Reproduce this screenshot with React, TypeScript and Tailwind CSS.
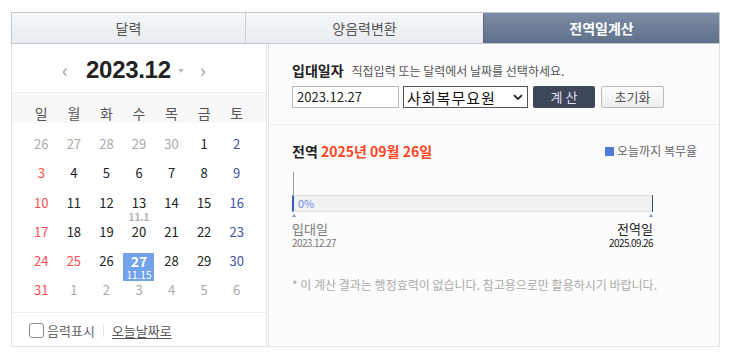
import React from "react";

const KR = { fontFamily: '"Noto Sans CJK KR", "Noto Sans", sans-serif' };

type Cell = { d: string; c: string; sub?: string; sel?: boolean };

const G = "text-[#aaaaaa]";
const N = "text-[#222222]";
const R = "text-[#ff4d4d]";
const B = "text-[#4652a8]";

const rows: Cell[][] = [
  [
    { d: "26", c: G },
    { d: "27", c: G },
    { d: "28", c: G },
    { d: "29", c: G },
    { d: "30", c: G },
    { d: "1", c: N },
    { d: "2", c: B },
  ],
  [
    { d: "3", c: R },
    { d: "4", c: N },
    { d: "5", c: N },
    { d: "6", c: N },
    { d: "7", c: N },
    { d: "8", c: N },
    { d: "9", c: B },
  ],
  [
    { d: "10", c: R },
    { d: "11", c: N },
    { d: "12", c: N },
    { d: "13", c: N, sub: "11.1" },
    { d: "14", c: N },
    { d: "15", c: N },
    { d: "16", c: B },
  ],
  [
    { d: "17", c: R },
    { d: "18", c: N },
    { d: "19", c: N },
    { d: "20", c: N },
    { d: "21", c: N },
    { d: "22", c: N },
    { d: "23", c: B },
  ],
  [
    { d: "24", c: R },
    { d: "25", c: R },
    { d: "26", c: N },
    { d: "27", c: "text-white", sub: "11.15", sel: true },
    { d: "28", c: N },
    { d: "29", c: N },
    { d: "30", c: B },
  ],
  [
    { d: "31", c: R },
    { d: "1", c: G },
    { d: "2", c: G },
    { d: "3", c: G },
    { d: "4", c: G },
    { d: "5", c: G },
    { d: "6", c: G },
  ],
];

const week = ["일", "월", "화", "수", "목", "금", "토"];

export default function App() {
  return (
    <div className="w-[733px] h-[359px] bg-white overflow-hidden" style={KR}>
      <div className="ml-[11px] mt-[12px] w-[709px]">
        {/* Tabs */}
        <div className="flex h-[32px] border border-[#c3c8ce]">
          <div className="w-[234px] flex items-center justify-center bg-gradient-to-b from-[#f5f7f9] to-[#e8ecf0] text-[14px] text-[#555] border-r border-[#c9ced4]">
            달력
          </div>
          <div className="w-[238px] flex items-center justify-center bg-gradient-to-b from-[#f5f7f9] to-[#e8ecf0] text-[14px] text-[#555] border-r border-[#5b6a80]">
            양음력변환
          </div>
          <div className="flex-1 flex items-center justify-center bg-gradient-to-b from-[#7d8ca3] to-[#5f7089] text-[14px] font-bold text-white">
            전역일계산
          </div>
        </div>

        {/* Body */}
        <div className="flex h-[303px]">
          {/* Left calendar */}
          <div className="w-[256px] border-l border-r border-b border-[#e3e3e3] bg-white flex flex-col">
            <div className="h-[48px] flex items-center pl-[50px] pt-[4px]">
              <span className="text-[#a0a0a0] text-[20px] leading-none">‹</span>
              <span
                className="ml-[18px] text-[24px] font-bold text-[#222] leading-none tracking-[-0.3px]"
                style={{ fontFamily: '"Liberation Sans", Arial, sans-serif' }}
              >
                2023.12
              </span>
              <svg className="ml-[7px] mt-[2px]" width="6" height="4" viewBox="0 0 6 4">
                <path d="M0 0 L6 0 L3 4 Z" fill="#c0c0c0" />
              </svg>
              <span className="ml-[16px] text-[#a0a0a0] text-[20px] leading-none">›</span>
            </div>
            <div className="h-[31px] bg-[#f8f8f8] border-t border-[#eeeeee] grid grid-cols-7 px-[13px] items-center">
              {week.map((w) => (
                <div key={w} className="text-center text-[14px] text-[#555] leading-none pt-[10px]">
                  {w}
                </div>
              ))}
            </div>
            <div className="px-[13px] pt-[13px]">
              {rows.map((r, i) => (
                <div key={i} className="grid grid-cols-7 h-[29.3px]">
                  {r.map((c, j) => (
                    <div key={j} className="flex justify-center">
                      <div
                        className={`w-[31px] h-[28px] flex flex-col items-center ${
                          c.sel ? "bg-[#72a2ea]" : ""
                        }`}
                      >
                        <span
                          className={`text-[13px] leading-[16px] ${c.c} ${c.sel ? "font-bold text-[14px]" : ""}`}
                        >
                          {c.d}
                        </span>
                        {c.sub && (
                          <span
                            className={`text-[10px] leading-[11px] ${
                              c.sel ? "text-white" : "text-[#b0b0b0] font-bold"
                            }`}
                          >
                            {c.sub}
                          </span>
                        )}
                      </div>
                    </div>
                  ))}
                </div>
              ))}
            </div>
            <div className="mt-auto h-[34px] border-t border-[#eeeeee] flex items-center pl-[17px] pt-[2px]">
              <span className="w-[15px] h-[15px] border border-[#888] rounded-[3px] bg-white" />
              <span className="ml-[3px] text-[13px] text-[#666] leading-none">음력표시</span>
              <span className="mx-[8px] w-px h-[12px] bg-[#e0e3ea]" />
              <span className="text-[13px] text-[#555] leading-none underline underline-offset-2">오늘날짜로</span>
            </div>
          </div>

          {/* Right panel */}
          <div className="flex-1 ml-[1px] border-l border-r border-b border-[#e3e3e3] bg-[#fcfcfc] flex flex-col">
            <div className="h-[81px] border-b border-[#ececec] pl-[23px] pt-[17px]">
              <div className="flex items-baseline">
                <span className="text-[14px] font-bold text-[#222] leading-[18px]">입대일자</span>
                <span className="ml-[8px] text-[12px] text-[#555] leading-[18px]">
                  직접입력 또는 달력에서 날짜를 선택하세요.
                </span>
              </div>
              <div className="flex mt-[6px] items-center">
                <div className="w-[107px] h-[22px] border border-[#bbbbbb] bg-white flex items-center pl-[4px] text-[13px] text-[#222]">
                  2023.12.27
                </div>
                <div className="ml-[4px] w-[125px] h-[22px] border border-[#555] bg-white flex items-center pl-[3px] pr-[4px] justify-between">
                  <span className="text-[15px] text-[#111] leading-none tracking-[1px]">사회복무요원</span>
                  <svg width="10" height="7" viewBox="0 0 10 7">
                    <path d="M1 1.2 L5 5 L9 1.2" stroke="#222" strokeWidth="1.8" fill="none" />
                  </svg>
                </div>
                <div className="ml-[5px] w-[62px] h-[22px] rounded-[2px] bg-[#3e4659] flex items-center justify-center text-[13px] text-[#dde] tracking-[3px] pl-[3px]">
                  계산
                </div>
                <div className="ml-[6px] w-[63px] h-[22px] rounded-[2px] border border-[#bbb] bg-gradient-to-b from-[#fdfdfd] to-[#ededed] flex items-center justify-center text-[13px] text-[#555]">
                  초기화
                </div>
              </div>
            </div>

            <div className="pl-[23px] pr-[22px] pt-[16px]">
              <div className="flex items-center justify-between">
                <div className="text-[14px] leading-[20px] font-bold">
                  <span className="text-[#222]">전역 </span>
                  <span className="text-[#ff4521]">2025년 09월 26일</span>
                </div>
                <div className="flex items-center">
                  <span className="w-[9px] h-[9px] bg-[#4f7bd6]" />
                  <span className="ml-[3px] text-[12px] text-[#666] leading-none">오늘까지 복무율</span>
                </div>
              </div>

              <div className="w-[361px] mt-[11px]">
                <div className="ml-[1px] w-px h-[23px] bg-[#999]" />
                <div className="h-[17px] bg-[#f1f1f1] border-t border-b border-r border-[#dedede] border-l-2 border-l-[#3a5bc7] flex items-center relative">
                  <span className="ml-[4px] text-[11px] text-[#6f8ee0] leading-none">0%</span>
                  <span className="absolute right-[-1px] top-[-1px] w-px h-[17px] bg-[#3a4a8a]" />
                </div>
                <div className="flex justify-between h-[5px] items-end">
                  <svg width="4" height="3" viewBox="0 0 4 3"><path d="M2 0 L4 3 L0 3 Z" fill="#7b97e0" /></svg>
                  <svg width="4" height="3" viewBox="0 0 4 3"><path d="M2 0 L4 3 L0 3 Z" fill="#7b97e0" /></svg>
                </div>
                <div className="flex justify-between mt-[4px]">
                  <div className="flex flex-col">
                    <span className="text-[13px] leading-[15px] text-[#777]">입대일</span>
                    <span className="mt-[1px] text-[10px] leading-[11px] text-[#777] tracking-[-0.6px]">2023.12.27</span>
                  </div>
                  <div className="flex flex-col items-end">
                    <span className="text-[13px] leading-[15px] text-[#222]">전역일</span>
                    <span className="mt-[1px] text-[10px] leading-[11px] text-[#222] tracking-[-0.6px]">2025.09.26</span>
                  </div>
                </div>
              </div>

              <div className="mt-[29px] text-[12px] leading-[16px] text-[#aaaaaa]">
                * 이 계산 결과는 행정효력이 없습니다. 참고용으로만 활용하시기 바랍니다.
              </div>
            </div>
          </div>
        </div>
      </div>
    </div>
  );
}
